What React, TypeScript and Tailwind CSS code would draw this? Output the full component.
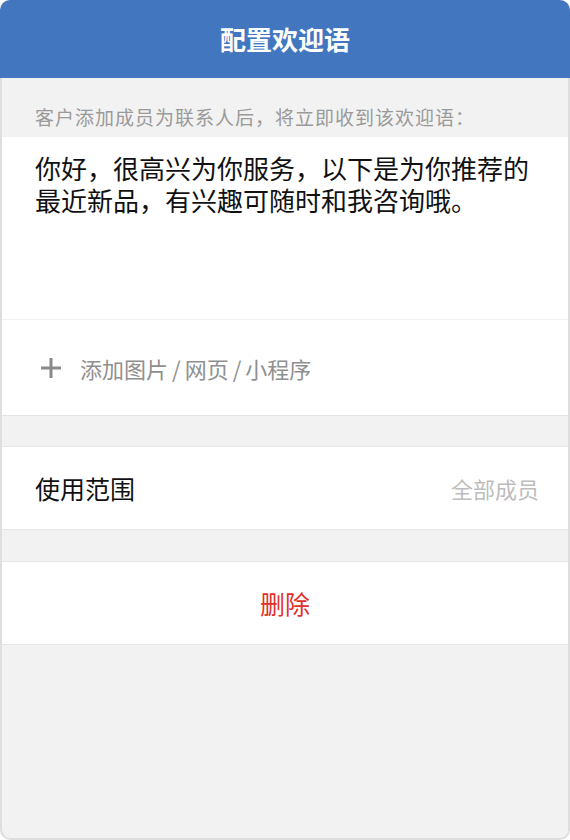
import React from "react";

const font = { fontFamily: '"Noto Sans CJK SC", "Noto Sans", sans-serif' };

export default function App() {
  return (
    <div className="w-[570px] h-[840px] flex flex-col rounded-[10px] overflow-hidden bg-[#f2f2f2]" style={font}>
      <div className="h-[78px] shrink-0 bg-[#4277bf] flex items-center justify-center">
        <span className="text-white text-[26px] font-semibold leading-none">配置欢迎语</span>
      </div>
      <div className="flex-1 flex flex-col border-x-2 border-b-2 border-[#dedede] rounded-b-[10px] bg-[#f2f2f2]">
        <div className="h-[59px] shrink-0 pl-[33px] pt-[25px]">
          <p className="text-[19px] leading-[27px] tracking-[1px] text-[#9a9a9a]">客户添加成员为联系人后，将立即收到该欢迎语：</p>
        </div>
        <div className="bg-white border-b border-[#e3e3e3]">
          <div className="h-[182px] pl-[33px] pt-[15px] flex flex-col">
            <p className="text-[26px] leading-[32px] text-[#111]">你好，很高兴为你服务，以下是为你推荐的</p>
            <p className="text-[26px] leading-[32px] text-[#111]">最近新品，有兴趣可随时和我咨询哦。</p>
          </div>
          <div className="h-px bg-[#f0f0f0]" />
          <div className="h-[95px] flex items-center pl-[38px]">
            <svg width="22" height="22" viewBox="0 0 22 22" className="shrink-0">
              <path d="M11 1v20M1 11h20" stroke="#8a8a8a" strokeWidth="3" fill="none" />
            </svg>
            <span className="ml-[18px] text-[22px] leading-none text-[#8f8f8f] flex items-center">
              添加图片<span className="mx-[4px]">/</span>网页<span className="mx-[4px]">/</span>小程序
            </span>
          </div>
        </div>
        <div className="h-[30px] shrink-0" />
        <div className="h-[84px] shrink-0 bg-white border-y border-[#e6e6e6] flex items-center justify-between pl-[33px] pr-[29px]">
          <span className="text-[25px] leading-none text-[#111]">使用范围</span>
          <span className="text-[22px] leading-none text-[#bdbdbd]">全部成员</span>
        </div>
        <div className="h-[31px] shrink-0" />
        <div className="h-[84px] shrink-0 bg-white border-y border-[#e6e6e6] flex items-center justify-center">
          <span className="text-[25px] leading-none text-[#e0302a]">删除</span>
        </div>
      </div>
    </div>
  );
}
